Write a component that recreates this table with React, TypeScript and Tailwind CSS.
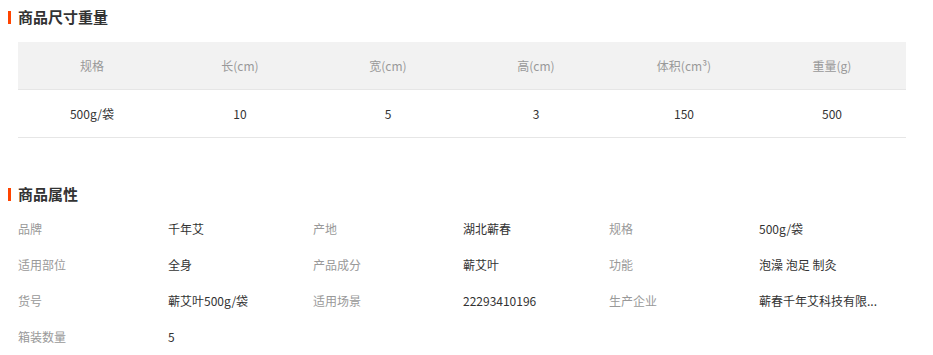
import React from 'react';

const sizeHeaders = ['规格', '长(cm)', '宽(cm)', '高(cm)', '体积(cm³)', '重量(g)'];
const sizeRow = ['500g/袋', '10', '5', '3', '150', '500'];

const attrs: [string, string][] = [
  ['品牌', '千年艾'],
  ['产地', '湖北蕲春'],
  ['规格', '500g/袋'],
  ['适用部位', '全身'],
  ['产品成分', '蕲艾叶'],
  ['功能', '泡澡 泡足 制灸'],
  ['货号', '蕲艾叶500g/袋'],
  ['适用场景', '22293410196'],
  ['生产企业', '蕲春千年艾科技有限...'],
  ['箱装数量', '5'],
];

const SectionTitle = ({ text }: { text: string }) => (
  <div className="flex items-center h-[16px]">
    <span className="w-[3px] h-[13px] bg-[#ff4400] ml-[8px] mr-[7px]"></span>
    <span className="text-[15px] font-bold text-[#333] leading-[16px]">{text}</span>
  </div>
);

const App = () => {
  return (
    <div
      className="w-[933px] h-[355px] bg-white overflow-hidden"
      style={{ fontFamily: '"Noto Sans CJK SC", "Noto Sans", sans-serif' }}
    >
      <div className="pt-[9px]">
        <SectionTitle text="商品尺寸重量" />
        <div className="ml-[18px] w-[888px] mt-[17px] text-[12px]">
          <div className="grid grid-cols-6 h-[48px] items-center text-center bg-[#f2f2f2] border-b border-[#e6e6e6] text-[#999]">
            {sizeHeaders.map((h) => (
              <div key={h}>{h}</div>
            ))}
          </div>
          <div className="grid grid-cols-6 h-[48px] items-center text-center border-b border-[#e6e6e6] text-[#333]">
            {sizeRow.map((v, i) => (
              <div key={i}>{v}</div>
            ))}
          </div>
        </div>
      </div>

      <div className="mt-[48px]">
        <SectionTitle text="商品属性" />
        <div className="ml-[18px] w-[888px] mt-[9px] grid grid-cols-[295px_296px_297px] text-[12px]">
          {attrs.map(([label, value]) => (
            <div key={label} className="flex items-center h-[36px]">
              <span className="w-[150px] shrink-0 text-[#999]">{label}</span>
              <span className="whitespace-nowrap text-[#333]">{value}</span>
            </div>
          ))}
        </div>
      </div>
    </div>
  );
};

export default App;
